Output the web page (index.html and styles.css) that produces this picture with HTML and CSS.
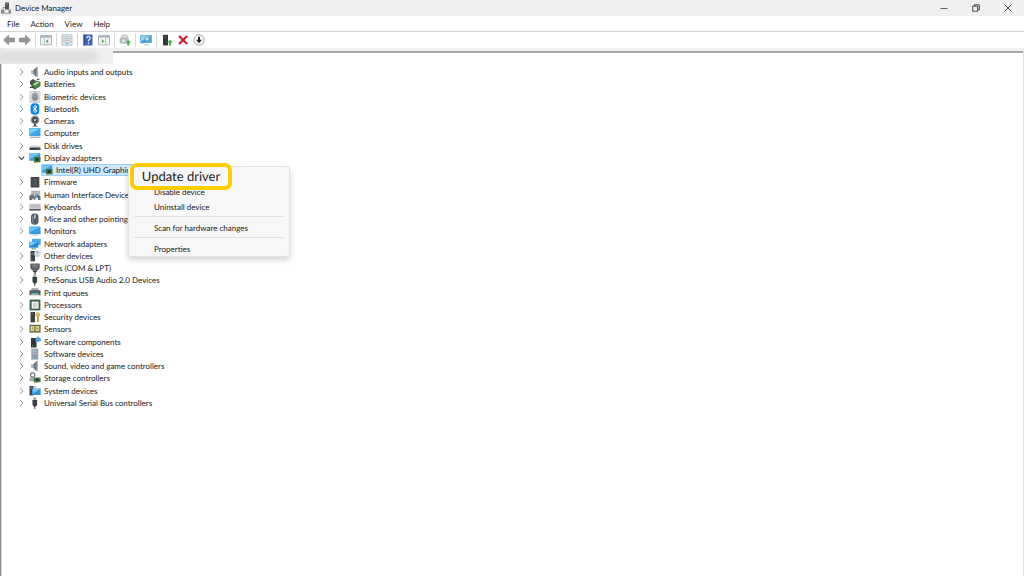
FILE: index.html
```html
<!DOCTYPE html>
<html lang="en">
<head>
  <meta charset="UTF-8">
  <meta name="viewport" content="width=device-width, initial-scale=1.0">
  <title>Device Manager</title>
  <link rel="stylesheet" href="styles.css">
</head>
<body>
  <!-- icon set -->
  <svg class="sprite" aria-hidden="true">
    <symbol id="chevron" viewBox="0 0 12 12"><path d="M4 3 7 6 4 9" fill="none" stroke="#8a8a8a" stroke-width=".9"/></symbol>
    <symbol id="chevron-open" viewBox="0 0 12 12"><path d="M2.8 4.7 5.5 7.4 8.2 4.7" fill="none" stroke="#444" stroke-width="1.1"/></symbol>
    <symbol id="speaker" viewBox="0 0 12 12"><path d="M2 4.5h2L7.5 1v10L4 8H2z" fill="#8d9398"/><path d="M5 3.5 8.7.5v11L5 8.5z" fill="#737a80"/><path d="M7.7 1.3h1v9.4h-1z" fill="#b9c0c5"/><path d="M2 4.5h2V8H2z" fill="#b6bdc2"/></symbol>
    <symbol id="battery" viewBox="0 0 12 12"><path d="M1 3 4 1l3 2-1 3-3 2-2-2z" fill="#4b5250"/><path d="M2.5 6.5 7.5 2.5l4 1.5v4L6 11.5l-3.5-2z" fill="#49813f"/><path d="m4 6.5 4-2.7 2 .8-4 3z" fill="#c2e5ae"/><path d="M8 1.5 10.5 1M.8 9.5 4 9l2 2" stroke="#333" fill="none"/></symbol>
    <symbol id="finger" viewBox="0 0 12 12"><path d="M1 .5h10v11H1z" fill="#dfe3e5" stroke="#b4bcc0" stroke-width=".6"/><ellipse cx="6" cy="6" rx="3.4" ry="4.4" fill="#a0a6aa"/><path d="M4 8c0-6 4-6 4 0M5.3 9V6.3M6.7 9V6.3" fill="none" stroke="#737b80" stroke-width=".7"/></symbol>
    <symbol id="bluetooth" viewBox="0 0 12 12"><rect x="1.5" y=".3" width="8.8" height="11.4" rx="4" fill="#0a84f2"/><path d="m3.8 3.9 4.2 4L6 9.7V2.3l2 1.8-4.2 4" fill="none" stroke="#fff" stroke-width=".9"/></symbol>
    <symbol id="camera" viewBox="0 0 12 12"><circle cx="6" cy="5" r="4.4" fill="#898e91"/><circle cx="6" cy="5" r="2.9" fill="#44484a"/><circle cx="6" cy="5" r="1.3" fill="#b5bcc0"/><path d="M5 9h2v1.5l2 1H3l2-1z" fill="#4d5153"/></symbol>
    <symbol id="monitor" viewBox="0 0 12 12"><path d="M.3 1.5h11.2v7.7H.3z" fill="#2f9be0"/><path d="M.8 2h10.2L.8 7.5z" fill="#63c1f5"/><path d="M3.5 10.2h5" stroke="#9db6c5" stroke-width=".8"/></symbol>
    <symbol id="computer" viewBox="0 0 12 12"><path d="M.3 1h11.2v8H.3z" fill="#3fa4e5"/><path d="M.8 1.5h10.2L.8 7z" fill="#7fcdf8"/><path d="M1 10.2h10.5" stroke="#8fa0ac" stroke-width="1.1"/></symbol>
    <symbol id="disk" viewBox="0 0 12 12"><path d="M2 5.5h8L11.5 8H.5z" fill="#d0d3d5"/><path d="M.5 7.5h11V10H.5z" fill="#3b4041"/><path d="M8.5 8.8h2" stroke="#4bb76a" stroke-width=".8"/></symbol>
    <symbol id="display" viewBox="0 0 12 12"><path d="M.3 1.2h10.9v7.6H.3z" fill="#3c9fe0"/><path d="M.7 1.6h10L.7 7z" fill="#74c6f4"/><path d="M5 5h6.5v5.3H5z" fill="#3a7746"/><path d="M6.8 6.3h2.8v2.4H6.8z" fill="#1d2c20"/><path d="M5 10.6h3" stroke="#d5a62d" stroke-width="1"/></symbol>
    <symbol id="firmware" viewBox="0 0 12 12"><path d="M2 1h8v10.5H2z" fill="#393d40"/><path d="M3.5 2h5v8h-5z" fill="#50565b"/><path d="M1 2.2h1.5M1 4.2h1.5M1 6.2h1.5M1 8.2h1.5M1 10.2h1.5M9.5 2.2H11M9.5 4.2H11M9.5 6.2H11M9.5 8.2H11M9.5 10.2H11" stroke="#777" stroke-width=".9"/></symbol>
    <symbol id="hid" viewBox="0 0 12 12"><path d="M2 1.5h9.5v4.7H2z" fill="#c7ccd0"/><path d="M2.7 2.8h8M2.7 4.4h8" stroke="#8b9398" stroke-width=".6"/><path d="M.3 11V7L2 5.5h2.5l1 2 1-2H9l2.5 1.8V11H9V9L6.5 8.5v2.3h-2V9L2.5 11z" fill="#697178"/><path d="M6.8 6.5h1.5v2H6.8z" fill="#5db1ea"/></symbol>
    <symbol id="keyboard" viewBox="0 0 12 12"><path d="M.3 2.7h11.4V9H.3z" fill="#c9cdd0"/><path d="M1.5 4.3h9M1.5 6h9" stroke="#a3a9ad" stroke-width=".7"/><path d="M.3 8h11.4v1.6H.3z" fill="#55595c"/></symbol>
    <symbol id="mouse" viewBox="0 0 12 12"><rect x="2" y=".5" width="7.5" height="11.2" rx="3.4" fill="#565c66"/><path d="M5.8 1.5v4.2" stroke="#e2e5e8" stroke-width="1.3"/><path d="M3.6 3v5c0 2 1 2.4 2.2 2.4" stroke="#979ea6" fill="none" stroke-width=".8"/></symbol>
    <symbol id="network" viewBox="0 0 12 12"><path d="M3 .8h8.7v6.5H3z" fill="#49aeea"/><path d="M.3 3.7h8.9v6H.3z" fill="#2389d4"/><path d="M.7 4.1h8L.7 8.2z" fill="#72ccf8"/><path d="M2.5 10.8h4.5" stroke="#58a763" stroke-width="1.1"/></symbol>
    <symbol id="other" viewBox="0 0 12 12"><path d="M1.5 1H6v10.3H1.5z" fill="#3b4042"/><path d="M2.3 3h2M2.3 4.6h2" stroke="#a0aaad" stroke-width=".6"/><circle cx="8.3" cy="3.7" r="3" fill="#e3eaf0" stroke="#a4afb8" stroke-width=".5"/><path d="M7.3 2.9c.1-1.2 2-1 1.8.1-.1.6-.8.5-.8 1.4M8.3 5.2v.6" fill="none" stroke="#4774a4" stroke-width=".7"/><path d="M2.3 9.3h1" stroke="#52b866" stroke-width=".8"/></symbol>
    <symbol id="port" viewBox="0 0 12 12"><path d="M1.3 1.5h9.4V6L9 8.5H3L1.3 6z" fill="#5a5e60"/><path d="M3 3.2h6M3.5 5h5" stroke="#a5a8aa" stroke-width=".7"/><path d="M4 8.5h4v1.5H4zM5.3 10h1.4v2H5.3z" fill="#3d4041"/></symbol>
    <symbol id="usb" viewBox="0 0 12 12"><path d="M4.2.3h3V3h-3z" fill="#a2a5a7"/><path d="M3.4 3h4.7v4.5l-1 2H4.5l-1-2z" fill="#3c3f40"/><path d="M5.8 9v3" stroke="#444" stroke-width="1"/></symbol>
    <symbol id="printer" viewBox="0 0 12 12"><path d="M2.5 1.2h7V4h-7z" fill="#9ca5ab"/><path d="M.5 3.3h11v5H.5z" fill="#515a60"/><path d="M2.5 5.8h7v1.5h-7z" fill="#59b9a8"/><path d="M2 7.5h8l.7 1.8H1.3z" fill="#e2e5e7"/></symbol>
    <symbol id="cpu" viewBox="0 0 12 12"><path d="M.6.6h10.8v10.8H.6z" fill="#39664a"/><path d="M2.6 2.6h7v7h-7z" fill="#f0f2f0"/><path d="M3.9 3.9h4.4v4.4H3.9z" fill="#cdd3cf"/></symbol>
    <symbol id="security" viewBox="0 0 12 12"><path d="M1.5 1H6v10.3H1.5z" fill="#3b4042"/><path d="M2.3 3h2" stroke="#a0aaad" stroke-width=".6"/><circle cx="8.8" cy="3.7" r="2.4" fill="#d8ae5a"/><path d="M8 5h1.7v6.3H8z" fill="#cfa04a"/><path d="M9.5 8h1M9.5 10h1" stroke="#c9963a"/><circle cx="8.8" cy="3" r=".6" fill="#fff"/></symbol>
    <symbol id="sensor" viewBox="0 0 12 12"><path d="M.4 1.8h11.2v7.8H.4z" fill="#66665a"/><path d="M1.5 3h3.8v5.2H1.5z" fill="#e5d68a"/><path d="M6.5 3h3.8v5.2H6.5z" fill="#e0ce77"/><path d="M3.5 3.7v3.5M7.2 5.5h2.5M5.8 3v5" stroke="#a2945a" stroke-width=".8"/></symbol>
    <symbol id="component" viewBox="0 0 12 12"><path d="M2 2h5.5v9.5H2z" fill="#2f3436"/><path d="M3 9.8h1.4" stroke="#53c567" stroke-width="1"/><path d="M6.5 1.8H8V.5h1.8v1.3h1.7v1.7h.5v1.7h-2.2v.8H6.5z" fill="#4aa2dc"/></symbol>
    <symbol id="device" viewBox="0 0 12 12"><path d="M2.3.6h7v11h-7z" fill="#94a0aa"/><path d="M3.2 2h5M3.2 3.7h5M3.2 5.4h5" stroke="#b6c4ce" stroke-width=".7"/><path d="M6.8 9.7h1.5" stroke="#4b93cc"/></symbol>
    <symbol id="storage" viewBox="0 0 12 12"><circle cx="3.7" cy="3" r="2.1" fill="none" stroke="#6f7577" stroke-width="1.1"/><path d="M.7 5.5h5.5V9H.7z" fill="#8d9395"/><path d="M1.6 7.2h3" stroke="#eee" stroke-width=".8"/><path d="M4.8 5.5h6.8v4.8H4.8z" fill="#3f7d4c"/><path d="M6.8 6.8h3v2h-3z" fill="#23362a"/><path d="M5 10.7h4" stroke="#c79b36" stroke-width=".8"/></symbol>
    <symbol id="system" viewBox="0 0 12 12"><path d="M.5 1h3.8v9.5H.5z" fill="#3b464c"/><path d="M1.2 3h2" stroke="#9da7ac" stroke-width=".7"/><path d="M3.2 3.5h8.5V10H3.2z" fill="#2c93d9"/><path d="M3.7 4h7.5L3.7 8.5z" fill="#6cc9f7"/><path d="M4.3 1.5h2.5v1H4.3z" fill="#6f7b82"/></symbol>
    <symbol id="arrow" viewBox="0 0 12 12"><path d="M.5 6 5.5 1.3v2.8h6v3.8h-6v2.8z" fill="#979797" stroke="#777" stroke-width=".6"/></symbol>
    <symbol id="console" viewBox="0 0 12 12"><path d="M.5 1.6h11v9.2H.5z" fill="#f1f3f4" stroke="#a1aab1" stroke-width=".8"/><path d="M.5 1.6h11v2H.5z" fill="#a6b2bc"/><path d="M4.3 4v6.5" stroke="#a6b0b7" stroke-width=".8"/><path d="M8.2 5.2v4L5.5 7.2z" fill="#4db554"/></symbol>
    <symbol id="sheet" viewBox="0 0 12 12"><path d="M1 .8h10v10.4H1z" fill="#eef1f3" stroke="#a4aeb5" stroke-width=".8"/><path d="M2.3 2.5h7.4v6H2.3z" fill="#dbe1e5" stroke="#b4bec5" stroke-width=".6"/><path d="M3.3 4.4h5M3.3 6.4h5" stroke="#a8b3bb" stroke-width=".7"/><path d="M4.5 9.7H8" stroke="#69b5e5"/></symbol>
    <symbol id="help" viewBox="0 0 12 12"><path d="M1.5.5h9v11h-9z" fill="#3c62ba"/><path d="M1.5.5H3v11H1.5z" fill="#2a4a98"/><path d="M4.7 4.3C4.7 1.6 8.5 2 8.2 4.3 8 5.6 6.4 5.5 6.4 7.3M6.4 8.6v1.3" fill="none" stroke="#fff" stroke-width="1.1"/></symbol>
    <symbol id="scan" viewBox="0 0 12 12"><path d="M3 1h5l1 3H2z" fill="#dcdfe1" stroke="#adb3b6" stroke-width=".6"/><path d="M.7 4h9v5.5h-9z" fill="#b8bdc0"/><circle cx="4.8" cy="6.8" r="2.5" fill="#d9dddf" stroke="#999fa2" stroke-width=".7"/><path d="M8.3 11.5V9H6.7L9.3 6 12 9h-1.6v2.5z" fill="#45b44b"/></symbol>
    <symbol id="search-pc" viewBox="0 0 12 12"><path d="M.2 1h11.6v8H.2z" fill="#4ba8df"/><path d="M.7 1.5h10.5L.7 7.5z" fill="#92d3f4"/><circle cx="7" cy="4.9" r="2.1" fill="#c5e8f8" stroke="#5b8fae" stroke-width=".7"/><path d="m5.5 6.3-3.3 3.4" stroke="#537d94" stroke-width=".9"/><path d="M4 10.8h5" stroke="#9fabb3" stroke-width=".8"/></symbol>
    <symbol id="update" viewBox="0 0 12 12"><path d="M2 .8h5v10.6H2z" fill="#303536"/><path d="M3 3h2" stroke="#849093" stroke-width=".7"/><path d="M8 11.4V8.6H6.2L9 5.4l2.8 3.2h-1.7v2.8z" fill="#43b54a"/></symbol>
    <symbol id="remove" viewBox="0 0 12 12"><path d="m2 2 8 8M10 2l-8 8" stroke="#e01b24" stroke-width="2.2"/></symbol>
    <symbol id="down" viewBox="0 0 12 12"><circle cx="6" cy="6" r="5.2" fill="#fafafa" stroke="#8d8d8d" stroke-width=".8"/><path d="M5 2.8h2v3h2L6 9.2 3 5.8h2z" fill="#222"/></symbol>
  </svg>

  <header class="titlebar">
    <svg class="icon" viewBox="0 0 12 12"><path d="M5 .5h4v7H5z" fill="#4e5456"/><path d="M5.7 2h2" stroke="#b8c0c3" stroke-width=".6"/><path d="M1 7.5h3.5V11H1zM8.5 7.5H11V11H8.5z" fill="#8c9295"/><path d="M1 11.3h10M3 7V5.5h2" stroke="#777" fill="none" stroke-width=".7"/></svg>
    <h1>Device Manager</h1>
    <div class="window-controls">
      <button aria-label="Minimize"><svg viewBox="0 0 12 12"><path d="M2.5 6.5h7" stroke="#666"/></svg></button>
      <button aria-label="Restore"><svg viewBox="0 0 12 12"><path d="M2.7 4.2h5v5h-5zM4.3 4V2.8h5v5H8" fill="none" stroke="#444"/></svg></button>
      <button aria-label="Close"><svg viewBox="0 0 12 12"><path d="m2.8 2.8 6.4 6.4M9.2 2.8 2.8 9.2" stroke="#444"/></svg></button>
    </div>
  </header>

  <nav class="menubar">
    <button>File</button>
    <button>Action</button>
    <button>View</button>
    <button>Help</button>
  </nav>

  <div class="toolbar">
    <button aria-label="Back"><svg class="icon"><use href="#arrow"/></svg></button>
    <button aria-label="Forward"><svg class="icon flip"><use href="#arrow"/></svg></button>
    <span class="divider"></span>
    <button aria-label="Show console tree"><svg class="icon"><use href="#console"/></svg></button>
    <span class="divider"></span>
    <button aria-label="Properties"><svg class="icon"><use href="#sheet"/></svg></button>
    <span class="divider"></span>
    <button aria-label="Help"><svg class="icon"><use href="#help"/></svg></button>
    <button aria-label="Show action pane"><svg class="icon flip"><use href="#console"/></svg></button>
    <span class="divider"></span>
    <button aria-label="Update"><svg class="icon"><use href="#scan"/></svg></button>
    <span class="divider"></span>
    <button aria-label="Scan for changes"><svg class="icon"><use href="#search-pc"/></svg></button>
    <span class="divider"></span>
    <button aria-label="Update driver"><svg class="icon"><use href="#update"/></svg></button>
    <button aria-label="Uninstall"><svg class="icon"><use href="#remove"/></svg></button>
    <button aria-label="Disable"><svg class="icon"><use href="#down"/></svg></button>
  </div>

  <main class="pane">
    <div class="root-node"><span class="smudge"></span></div>
    <ul class="tree">
      <li><svg class="icon"><use href="#chevron"/></svg><svg class="icon"><use href="#speaker"/></svg><span>Audio inputs and outputs</span></li>
      <li><svg class="icon"><use href="#chevron"/></svg><svg class="icon"><use href="#battery"/></svg><span>Batteries</span></li>
      <li><svg class="icon"><use href="#chevron"/></svg><svg class="icon"><use href="#finger"/></svg><span>Biometric devices</span></li>
      <li><svg class="icon"><use href="#chevron"/></svg><svg class="icon"><use href="#bluetooth"/></svg><span>Bluetooth</span></li>
      <li><svg class="icon"><use href="#chevron"/></svg><svg class="icon"><use href="#camera"/></svg><span>Cameras</span></li>
      <li><svg class="icon"><use href="#chevron"/></svg><svg class="icon"><use href="#computer"/></svg><span>Computer</span></li>
      <li><svg class="icon"><use href="#chevron"/></svg><svg class="icon"><use href="#disk"/></svg><span>Disk drives</span></li>
      <li><svg class="icon"><use href="#chevron-open"/></svg><svg class="icon"><use href="#display"/></svg><span>Display adapters</span></li>
      <li class="child selected"><svg class="icon"><use href="#display"/></svg><span>Intel(R) UHD Graphics</span></li>
      <li><svg class="icon"><use href="#chevron"/></svg><svg class="icon"><use href="#firmware"/></svg><span>Firmware</span></li>
      <li><svg class="icon"><use href="#chevron"/></svg><svg class="icon"><use href="#hid"/></svg><span>Human Interface Devices</span></li>
      <li><svg class="icon"><use href="#chevron"/></svg><svg class="icon"><use href="#keyboard"/></svg><span>Keyboards</span></li>
      <li><svg class="icon"><use href="#chevron"/></svg><svg class="icon"><use href="#mouse"/></svg><span>Mice and other pointing devices</span></li>
      <li><svg class="icon"><use href="#chevron"/></svg><svg class="icon"><use href="#monitor"/></svg><span>Monitors</span></li>
      <li><svg class="icon"><use href="#chevron"/></svg><svg class="icon"><use href="#network"/></svg><span>Network adapters</span></li>
      <li><svg class="icon"><use href="#chevron"/></svg><svg class="icon"><use href="#other"/></svg><span>Other devices</span></li>
      <li><svg class="icon"><use href="#chevron"/></svg><svg class="icon"><use href="#port"/></svg><span>Ports (COM &amp; LPT)</span></li>
      <li><svg class="icon"><use href="#chevron"/></svg><svg class="icon"><use href="#usb"/></svg><span>PreSonus USB Audio 2.0 Devices</span></li>
      <li><svg class="icon"><use href="#chevron"/></svg><svg class="icon"><use href="#printer"/></svg><span>Print queues</span></li>
      <li><svg class="icon"><use href="#chevron"/></svg><svg class="icon"><use href="#cpu"/></svg><span>Processors</span></li>
      <li><svg class="icon"><use href="#chevron"/></svg><svg class="icon"><use href="#security"/></svg><span>Security devices</span></li>
      <li><svg class="icon"><use href="#chevron"/></svg><svg class="icon"><use href="#sensor"/></svg><span>Sensors</span></li>
      <li><svg class="icon"><use href="#chevron"/></svg><svg class="icon"><use href="#component"/></svg><span>Software components</span></li>
      <li><svg class="icon"><use href="#chevron"/></svg><svg class="icon"><use href="#device"/></svg><span>Software devices</span></li>
      <li><svg class="icon"><use href="#chevron"/></svg><svg class="icon"><use href="#speaker"/></svg><span>Sound, video and game controllers</span></li>
      <li><svg class="icon"><use href="#chevron"/></svg><svg class="icon"><use href="#storage"/></svg><span>Storage controllers</span></li>
      <li><svg class="icon"><use href="#chevron"/></svg><svg class="icon"><use href="#system"/></svg><span>System devices</span></li>
      <li><svg class="icon"><use href="#chevron"/></svg><svg class="icon"><use href="#usb"/></svg><span>Universal Serial Bus controllers</span></li>
    </ul>
  </main>

  <div class="context-menu">
    <button class="callout">Update driver</button>
    <button>Disable device</button>
    <button>Uninstall device</button>
    <hr>
    <button>Scan for hardware changes</button>
    <hr>
    <button>Properties</button>
  </div>
</body>
</html>
```

FILE: styles.css
```css
* {
  box-sizing: border-box;
}
body {
  margin: 0;
  min-height: 100vh;
  display: flex;
  flex-direction: column;
  background: #fff;
  color: #222;
  font-family: 'Segoe UI', Lato, sans-serif;
  font-size: 8px;
  line-height: 12px;
  text-rendering: geometricPrecision;
}
button {
  padding: 0;
  border: none;
  background: none;
  color: inherit;
  font: inherit;
  text-rendering: inherit;
}
.sprite {
  position: absolute;
  width: 0;
  height: 0;
}
.icon {
  width: 12px;
  height: 12px;
  flex: none;
  display: block;
}
.flip {
  transform: scaleX(-1);
}

/* title bar */
.titlebar {
  display: flex;
  align-items: center;
  height: 16px;
  background: #f0f0f0;
}
.titlebar h1 {
  margin: 0 0 0 3px;
  font-size: 8px;
  font-weight: normal;
}
.window-controls {
  display: flex;
  margin-left: auto;
}
.window-controls button {
  width: 32px;
  height: 16px;
  display: flex;
  align-items: center;
  justify-content: center;
}
.window-controls svg {
  width: 12px;
  height: 12px;
}

/* menu and toolbar */
.menubar {
  display: flex;
  gap: 11px;
  height: 16px;
  padding-left: 7px;
  border-bottom: 1px solid #d5d5d5;
}
.toolbar {
  display: flex;
  align-items: center;
  height: 16px;
  padding-left: 1px;
}
.toolbar button {
  width: 16px;
  height: 16px;
  padding: 2px;
}
.divider {
  width: 1px;
  height: 14px;
  margin: 0 2px;
  background: #d8d8d8;
}

/* device tree */
.pane {
  flex: 1;
  border-top: 3px solid #f0f0f0;
  border-right: 1px solid #e2e2e2;
  border-left: 1px solid #8f8f8f;
  box-shadow: inset 0 2px #a6a6a6, inset 1px 0 #dcdcdc;
}
.root-node {
  position: relative;
  width: 113px;
  height: 15px;
  margin: -2px 0 0 -1px;
  overflow: hidden;
  background: #f1f1f1;
}
.smudge {
  position: absolute;
  inset: 4px 16px 3px -4px;
  background: #d2d2d2;
  filter: blur(4px);
}
.tree {
  display: grid;
  grid-auto-rows: 1fr;
  height: 343px;
  margin: 2px 0 0;
  padding: 0 0 0 15px;
  list-style: none;
}
.tree li {
  display: flex;
  align-items: center;
  white-space: nowrap;
}
.tree li span {
  margin-left: 3px;
}
.tree .icon + .icon {
  margin-left: 1px;
}
.tree .child {
  width: 116px;
  margin-left: 25px;
}
.tree .selected {
  background: #cce8ff;
  outline: 1px solid #99d1ff;
  outline-offset: -1px;
}

/* context menu */
.context-menu {
  position: absolute;
  top: 166px;
  left: 128px;
  width: 162px;
  padding: 2px 0 0;
  border: 1px solid #e3e3e3;
  border-radius: 3px;
  background: #f7f7f7;
  box-shadow: 0 3px 6px rgba(0, 0, 0, 0.18);
}
.context-menu button {
  display: block;
  width: 100%;
  height: 15px;
  padding-left: 25px;
  text-align: left;
}
.context-menu hr {
  margin: 2px 5px 3px;
  border: none;
  border-top: 1px solid #e2e2e2;
}
.context-menu .callout {
  position: absolute;
  top: -4px;
  left: 1px;
  width: 102px;
  height: 27px;
  padding: 0 0 2px;
  border: 4px solid #fc0;
  border-radius: 7px;
  background: #f7f7f7;
  font-size: 13px;
  text-align: center;
}
.callout + button {
  margin-top: 15px;
}
```
